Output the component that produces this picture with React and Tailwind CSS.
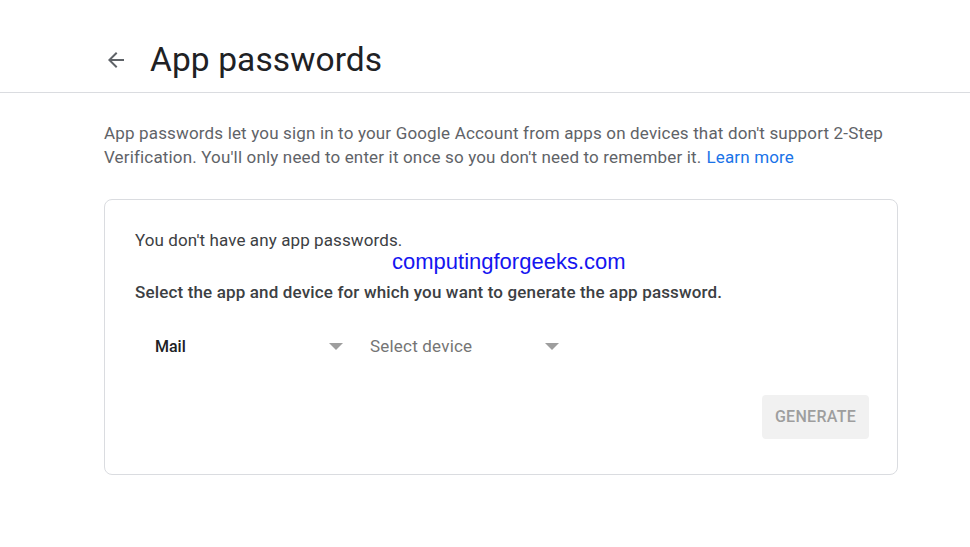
export default function App() {
  return (
    <div className="min-h-[547px] w-[970px] bg-white font-['Roboto',sans-serif]">
      <header className="flex h-[93px] items-center border-b border-[#dadce0] pl-[104px] pt-[28px]">
        <svg className="h-6 w-6 text-[#5f6368]" viewBox="0 0 24 24" fill="currentColor">
          <path d="M20 11H7.83l5.59-5.59L12 4l-8 8 8 8 1.41-1.41L7.83 13H20v-2z" />
        </svg>
        <h1 className="ml-[22px] text-[33.5px] font-normal leading-10 tracking-[0.1px] text-[#202124]">App passwords</h1>
      </header>

      <div className="ml-[104px] w-[794px]">
        <div className="mt-[28px] text-[17px] leading-6 tracking-[0.16px] text-[#5f6368]">
          <p>App passwords let you sign in to your Google Account from apps on devices that don't support 2-Step</p>
          <p className="flex gap-[5px]">
            <span>Verification. You'll only need to enter it once so you don't need to remember it.</span>
            <span className="text-[#1a73e8]">Learn more</span>
          </p>
        </div>

        <div className="mt-[30px] rounded-lg border border-[#dadce0] px-[30px] pb-[35px] pt-[28px]">
          <p className="text-[17px] leading-6 tracking-[0.1px] text-[#3c4043]">You don't have any app passwords.</p>
          <p className="-mt-[2px] ml-[257px] font-['Liberation_Sans',sans-serif] text-[22px] leading-6 text-[#1515f0]">
            computingforgeeks.com
          </p>
          <p className="mt-[6px] text-[17px] font-medium leading-6 tracking-[0.15px] text-[#3c4043]">
            Select the app and device for which you want to generate the app password.
          </p>

          <div className="mt-[30px] flex items-center">
            <div className="flex w-[215px] items-center justify-between pl-5 pr-[7px]">
              <span className="text-base font-medium text-[#202124]">Mail</span>
              <span className="h-0 w-0 border-x-[7px] border-t-[7px] border-x-transparent border-t-[#9e9e9e]" />
            </div>
            <div className="flex w-[215px] items-center justify-between pl-5 pr-[6px]">
              <span className="text-[17px] tracking-[0.2px] text-[#757575]">Select device</span>
              <span className="h-0 w-0 border-x-[7px] border-t-[7px] border-x-transparent border-t-[#9e9e9e]" />
            </div>
          </div>

          <div className="mt-[35px] flex justify-end">
            <button className="-mr-[2px] h-[44px] w-[107px] rounded bg-[#f1f1f1] text-base font-medium uppercase tracking-[0.3px] text-[#9e9e9e]">
              Generate
            </button>
          </div>
        </div>
      </div>
    </div>
  );
}
